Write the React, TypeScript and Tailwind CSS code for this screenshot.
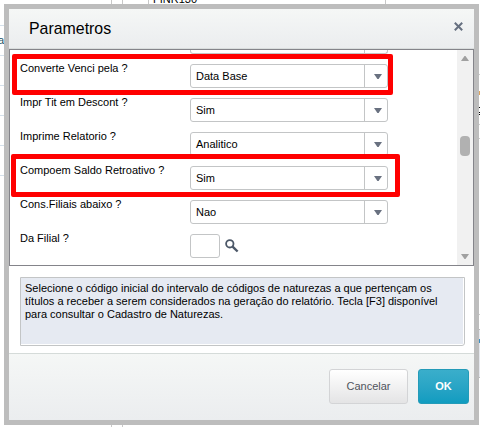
const fields = [
  { label: "Converte Venci pela ?", value: "Data Base" },
  { label: "Impr Tit em Descont ?", value: "Sim" },
  { label: "Imprime Relatorio ?", value: "Analitico" },
  { label: "Compoem Saldo Retroativo ?", value: "Sim" },
  { label: "Cons.Filiais abaixo ?", value: "Nao" },
];

const helpLines = [
  "Selecione o código inicial do intervalo de códigos de naturezas a que pertençam os",
  "títulos a receber a serem considerados na geração do relatório. Tecla [F3] disponível",
  "para consultar o Cadastro de Naturezas.",
];

const gridRows = ["r1", "r2", "r3", "r4", "r5"];

function Select({ value }: { value: string }) {
  return (
    <div className="flex h-6 w-[198px] shrink-0 rounded-[3px] border border-[#c3c5c6] bg-white">
      <div className="flex-1 pl-[5px] text-[11px] leading-[23px]">{value}</div>
      <div className="flex w-[23px] items-center justify-center border-l border-[#c3c5c6] pl-1">
        <svg width="8" height="5" viewBox="0 0 8 5" className="block">
          <path d="M0 0h8L4.6 5H3.4z" fill="#697180" />
        </svg>
      </div>
    </div>
  );
}

/* The form behind the dialog, of which only the edges stay visible. */
function Backdrop() {
  return (
    <div className="absolute inset-0 flex justify-between overflow-hidden text-[11px]">
      <div className="flex w-[112px] flex-col border-r border-[#c8c8c8] pt-[25px] text-[#27566b]">
        <div className="-ml-[2px] h-[30px] border-t border-[#d5e1eb] pt-[8px] leading-3">a</div>
        {gridRows.map((row) => (
          <div key={row} className="h-[30px] border-t border-[#d5e1eb]" />
        ))}
      </div>
      <div className="ml-[10px] flex flex-1 items-start border-l border-[#c8c8c8] pl-[25px]">
        <div className="h-2 w-[238px] border-x border-[#c8c8c8] pl-1">
          <p className="-mt-[7px] leading-3 text-black">FINR130</p>
        </div>
      </div>
      <div className="flex w-px flex-col bg-white">
        <i className="mt-[74px] h-px bg-[#cccccc]" />
        <i className="mt-[16px] h-1 bg-[#e0a45b]" />
        <i className="mt-[12px] h-px bg-black" />
        <i className="mt-[4px] h-px bg-black" />
        <i className="mt-px h-px bg-black" />
        <i className="mt-[9px] h-px bg-[#cccccc]" />
        <i className="mt-[13px] h-px bg-[#cccccc]" />
        <i className="mt-[175px] h-px bg-[#cccccc]" />
        <i className="mt-[14px] h-[10px] border-t border-[#bbbbbb] bg-[#e6e8ee]" />
        <i className="h-1 bg-[#3e8fc1]" />
        <i className="h-[35px] border-b border-[#bbbbbb] bg-[#e6e8ee]" />
      </div>
    </div>
  );
}

export default function App() {
  return (
    <div className="relative h-[427px] w-[480px] overflow-hidden bg-white pl-1 pt-1 font-['Liberation_Sans',Arial,sans-serif] text-black">
      <Backdrop />
      <section className="relative flex h-[421px] w-[475px] flex-col border-[5px] border-[#bdbdbd] bg-white">
        <header className="flex h-10 shrink-0 items-center justify-between border-b border-[#d9dddd] bg-linear-to-b from-[#f5f7f6] to-[#ebedef] pl-5 pr-[11px]">
          <h1 className="origin-left scale-x-[.935] text-[17px] leading-[38px]">Parametros</h1>
          <button className="mb-[5px]" aria-label="Fechar">
            <svg width="9" height="9" viewBox="0 0 9 9" className="block">
              <path d="M.8.8l7.4 7.4M8.2.8L.8 8.2" stroke="#667080" strokeWidth="2" />
            </svg>
          </button>
        </header>

        <main className="flex h-[217px] shrink-0 border border-[#84848a]">
          <div className="flex-1 overflow-hidden pl-[10px]">
            <div className="flex h-[14px] items-start pl-[170px]">
              <div className="flex h-1 w-[198px] justify-end rounded-b-[3px] border border-t-0 border-[#c3c5c6]">
                <div className="w-[23px] border-l border-[#c3c5c6]" />
              </div>
            </div>
            {fields.map((f) => (
              <div key={f.label} className="flex h-[34px]">
                <label className="-mt-[2px] w-[170px] whitespace-nowrap text-[11px] leading-3">{f.label}</label>
                <Select value={f.value} />
              </div>
            ))}
            <div className="flex">
              <label className="-mt-[2px] w-[170px] text-[11px] leading-3">Da Filial ?</label>
              <div className="h-6 w-[30px] rounded-[3px] border border-[#c3c5c6]" />
              <svg width="14" height="14" viewBox="0 0 14 14" className="ml-[5px] mt-[5px]" fill="none" stroke="#4c5868">
                <circle cx="4.8" cy="4.8" r="3.7" strokeWidth="1.8" />
                <path d="M7.6 7.6l5 4.9" strokeWidth="2.4" />
              </svg>
            </div>
          </div>
          <div className="flex w-4 flex-col items-center justify-between bg-[#f1f1f1] py-[6px]">
            <svg width="8" height="5" viewBox="0 0 8 5" className="block">
              <path d="M3.5 0h1L8 5H0z" fill="#a0a0a0" />
            </svg>
            <div className="mb-[24px] h-5 w-[10px] rounded-[4px] bg-[#b1b1b1]" />
            <svg width="8" height="5" viewBox="0 0 8 5" className="block">
              <path d="M0 0h8L4.5 5h-1z" fill="#a0a0a0" />
            </svg>
          </div>
        </main>

        <div className="ml-[11px] mt-[11px] h-[69px] w-[445px] shrink-0 rounded-br-[3px] border border-[#c3c5c6] bg-white pb-px pr-px">
          <div className="h-full bg-[#e6eaf2] pl-1 pt-[4px] text-[11px] leading-[13px]">
            {helpLines.map((line) => (
              <p key={line} className="whitespace-nowrap">{line}</p>
            ))}
          </div>
        </div>

        <footer className="mt-[7px] flex flex-1 items-start justify-end gap-[10px] border-t border-[#d5dbd9] bg-linear-to-b from-[#f5f7f6] to-[#ebedef] pr-[5px] pt-[15px]">
          <button className="h-[35px] w-[79px] rounded-[3px] border border-[#d3d4d6] bg-linear-to-b from-white to-[#e4e4e5] text-[11px] text-[#50545d]">Cancelar</button>
          <button className="h-[35px] w-[51px] rounded-[3px] border border-[#249bb8] bg-linear-to-b from-[#3aaecb] to-[#109cc0] text-[11px] font-bold text-white">OK</button>
        </footer>
      </section>
      <div className="absolute left-[12px] top-[54px] h-[41px] w-[381px] rounded-[2px] border-[5px] border-[#ff0000]" />
      <div className="absolute left-[11px] top-[154px] h-[43px] w-[389px] rounded-[2px] border-[5px] border-[#ff0000]" />
    </div>
  );
}
